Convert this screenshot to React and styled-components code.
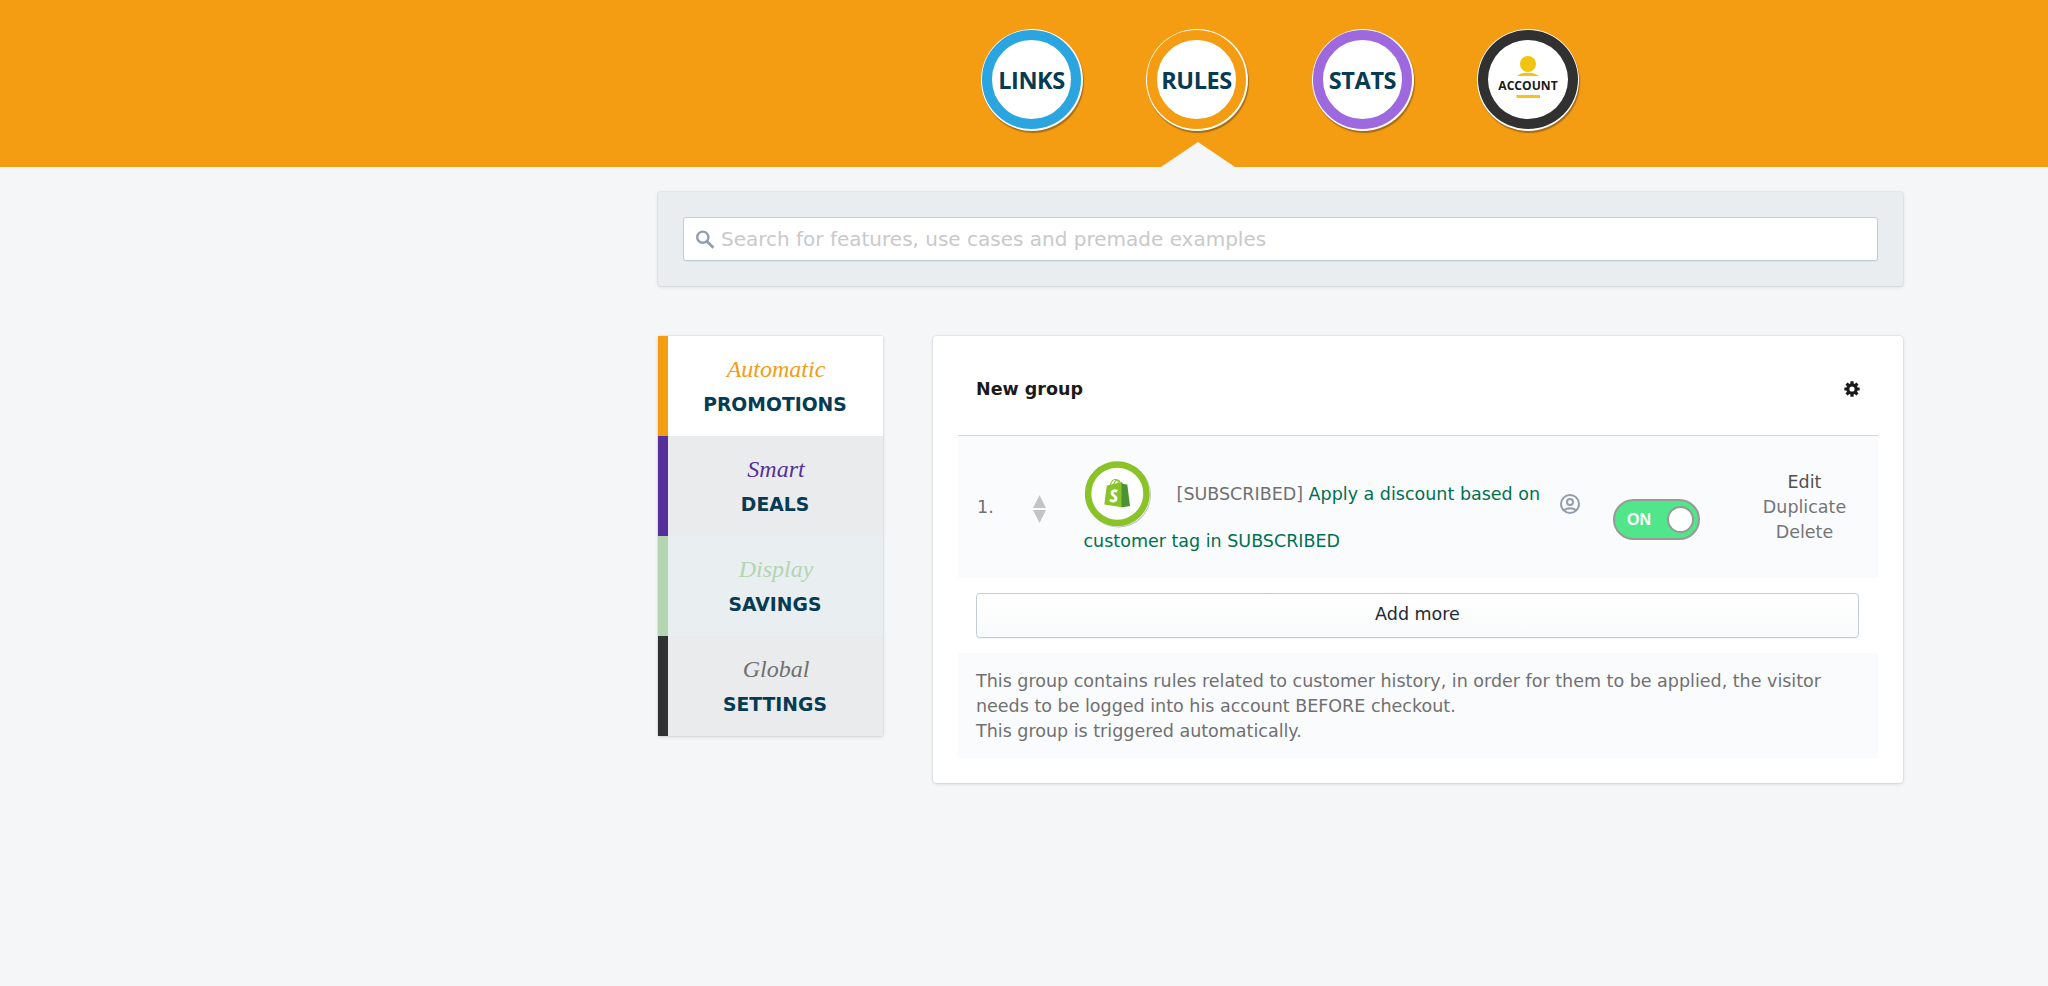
import React from "react";
import styled, { createGlobalStyle } from "styled-components";

const GlobalStyle = createGlobalStyle`
  * { box-sizing: border-box; }
  body {
    margin: 0;
    background: #f4f6f8;
    color: #707070;
    font: 17.5px/25px "DejaVu Sans", sans-serif;
  }
`;

const Screen = styled.div`
  min-height: 100vh;
`;

const Header = styled.header`
  height: 167px;
  padding-left: 981px;
  background: #f49c12;
`;

const Nav = styled.nav`
  display: grid;
  grid-template-columns: 165px 166px 165px 102px;
  padding-top: 29px;
`;

const NavItem = styled.a`
  position: relative;
  display: flex;
  width: 102px;
  height: 102px;
  border-radius: 50%;
  background: #fff;
  padding: 1px 2px 2px 1px;
  box-shadow: 1px 2px 1px rgba(70, 50, 20, 0.45);
`;

const Ring = styled.span`
  display: flex;
  flex: 1;
  align-items: center;
  justify-content: center;
  border: 10px solid ${(p) => p.$color};
  border-radius: 50%;
  background: #fff;
  color: #073b54;
  font: bold 23.5px/30px "Open Sans", sans-serif;
  letter-spacing: -0.4px;
`;

const Pointer = styled.span`
  position: absolute;
  top: 113px;
  left: 13.5px;
  width: 77px;
  height: 26px;
  background: #f4f6f8;
  clip-path: polygon(50% 0, 100% 100%, 0 100%);
`;

const AccountArt = styled.svg`
  width: 80px;
  height: 80px;
  flex: none;
  letter-spacing: 0;
`;

const Page = styled.main`
  width: 1245px;
  margin: 25px 0 0 658px;
`;

const cardShadow = `0 0 0 1px rgba(63, 63, 68, 0.05), 0 1px 3.75px 0 rgba(63, 63, 68, 0.17)`;

const SearchPanel = styled.section`
  height: 94px;
  padding: 25px;
  border-radius: 3px;
  background: #e9edf0;
  box-shadow: ${cardShadow};
`;

const SearchField = styled.label`
  display: flex;
  align-items: center;
  height: 44px;
  padding-left: 12px;
  gap: 6px;
  border: 1px solid #c4cdd5;
  border-radius: 3px;
  background: #fff;
  box-shadow: 0 1px 0 rgba(22, 29, 37, 0.05);
`;

const SearchInput = styled.input`
  flex: 1;
  border: 0;
  padding: 0;
  outline: 0;
  background: none;
  font: 20px/30px "DejaVu Sans", sans-serif;
  &::placeholder { color: #c9c9c9; opacity: 1; }
`;

const Columns = styled.div`
  display: flex;
  align-items: flex-start;
  gap: 50px;
  margin-top: 50px;
`;

const SideMenu = styled.aside`
  width: 225px;
  border-radius: 3px;
  box-shadow: ${cardShadow};
`;

const SideItem = styled.a`
  display: flex;
  flex-direction: column;
  align-items: center;
  gap: 6px;
  height: 100px;
  padding: 18px 1px 0 0;
  border-left: 10px solid ${(p) => p.$bar};
  background: ${(p) => p.$bg};
  color: #073b54;
`;

const Script = styled.span`
  padding-left: 2px;
  color: ${(p) => p.$color};
  font: italic 24px/30px "Z003", "URW Chancery L", "Liberation Serif", serif;
`;

const Caps = styled.span`
  font-size: 18.75px;
  font-weight: bold;
  line-height: 29px;
`;

const Card = styled.section`
  width: 970px;
  padding: 25px;
  border-radius: 4px;
  background: #fff;
  box-shadow: ${cardShadow};
`;

const CardHeader = styled.div`
  display: flex;
  align-items: center;
  justify-content: space-between;
  height: 75px;
  padding: 0 18.500px 18px 18px;
  border-bottom: 1px solid #d0d8df;
  color: #1a1a1a;
  font-weight: bold;
`;

const RuleRow = styled.div`
  display: flex;
  align-items: center;
  height: 142px;
  padding-left: 19px;
  background: #fafbfd;
`;

const Index = styled.span`
  width: 55px;
`;

const Sorter = styled.svg`
  width: 15px;
  height: 28px;
  margin: 4px 36.5px 0 0;
`;

const RuleText = styled.div`
  width: 460.5px;
`;

const Badge = styled.svg`
  width: 68px;
  height: 68px;
  margin-right: 19.5px;
  vertical-align: middle;
`;

const RuleLink = styled.a`
  color: #00704f;
`;

const PersonIcon = styled.svg`
  width: 20px;
  height: 20px;
  margin: 0 33px 6px 16px;
`;

const Toggle = styled.button`
  display: flex;
  align-items: center;
  justify-content: space-between;
  width: 87px;
  height: 41px;
  margin-top: 25px;
  padding: 0 4px 0 12px;
  border: 2px solid #999;
  border-radius: 20.5px;
  background: #50e689;
  color: #fff;
  font: bold 16px/20px "Liberation Sans", sans-serif;
`;

const Knob = styled.span`
  width: 27px;
  height: 27px;
  border: 2px solid #999;
  border-radius: 50%;
  background: #fff;
`;

const Actions = styled.div`
  display: flex;
  flex-direction: column;
  align-items: center;
  width: 147px;
  margin-left: 31px;
`;

const Action = styled.a`
  color: ${(p) => (p.$active ? "#505050" : "#757575")};
`;

const AddButton = styled.button`
  display: block;
  width: 883px;
  height: 45px;
  margin: 15px 0 15px 18px;
  padding: 0 0 2px;
  border: 1px solid #c4cdd5;
  border-radius: 4px;
  background: linear-gradient(#fff, #f9fafb);
  box-shadow: 0 1px 0 rgba(22, 29, 37, 0.05);
  color: #212b36;
  font: 17.5px/25px "DejaVu Sans", sans-serif;
`;

const Note = styled.p`
  height: 105px;
  margin: 0;
  padding: 16px 18px 14px;
  background: #fafbfd;
`;

const tabs = [
  { label: "LINKS", color: "#2aa5e0" },
  { label: "RULES", color: "#f49c12", active: true },
  { label: "STATS", color: "#9e69df" },
];

const sections = [
  { script: "Automatic", caps: "PROMOTIONS", bar: "#f49c12", bg: "#fff", ink: "#f49c12" },
  { script: "Smart", caps: "DEALS", bar: "#572f9b", bg: "#e9ebec", ink: "#572f9b" },
  { script: "Display", caps: "SAVINGS", bar: "#b3d5b1", bg: "#e9eef1", ink: "#b3d5b1" },
  { script: "Global", caps: "SETTINGS", bar: "#313132", bg: "#e9ebec", ink: "#707070" },
];

function SearchIcon() {
  return (
    <svg width="19" height="19" viewBox="0 0 19 19" fill="none" stroke="#919eb0" strokeWidth="2.4">
      <circle cx="6.8" cy="7.2" r="5.6" />
      <path d="M10.8 11.2L17.4 17.8" strokeWidth="2.8" />
    </svg>
  );
}

function GearIcon() {
  return (
    <svg width="16" height="16" viewBox="-8 -8 16 16">
      <circle r="4.2" fill="none" stroke="#1a1a1a" strokeWidth="3.2" />
      {[0, 45, 90, 135, 180, 225, 270, 315].map((a) => (
        <rect key={a} x="-1.6" y="-7.7" width="3.2" height="3.4" rx="0.5" fill="#1a1a1a" transform={`rotate(${a})`} />
      ))}
    </svg>
  );
}

function BagBadge() {
  return (
    <Badge viewBox="0 0 68 68">
      <circle cx="34.5" cy="34" r="32.4" fill="#b4b4b4" />
      <circle cx="33.9" cy="33.4" r="32.4" fill="#fff" />
      <circle cx="33.3" cy="32.7" r="29.2" fill="#fff" stroke="#8ac328" strokeWidth="6.5" />
      <path d="M26.5 24c.8-3.6 3-5.5 5-5.500 2 0 3 2 3.200 5M30 23c.6-2.500 2-4 3.600-4 1.400 0 2.300 1.300 2.700 3.500" fill="none" stroke="#8ac328" strokeWidth="1.1" />
      <path d="M22.800 24.500L38 21v25.200L20.300 43.500z" fill="#8ac328" />
      <path d="M37.500 21.200l1.700 1.900 4.100.5 2.700 21.300-8.500 1.600z" fill="#4c9132" />
      <path d="M33.300 30.300c-2-.9-5.200-.7-5.300 1.800-.1 2.400 4.300 2.700 4 5.600-.3 2.600-3.600 3-6.200 1.200" fill="none" stroke="#fff" strokeWidth="2.900" />
    </Badge>
  );
}

export default function App() {
  return (
    <Screen>
      <GlobalStyle />
      <Header>
        <Nav>
          {tabs.map((t) => (
            <NavItem key={t.label}>
              <Ring $color={t.color}>{t.label}</Ring>
              {t.active && <Pointer />}
            </NavItem>
          ))}
          <NavItem>
            <Ring $color="#313132">
              <AccountArt viewBox="0 0 80 80">
                <circle cx="40" cy="24" r="8" fill="#f1c40f" />
                <path d="M29 36c4-4.500 18-4.500 22 0z" fill="#f1c40f" />
                <text x="40" y="49.5" textAnchor="middle" fontFamily="Open Sans" fontWeight="bold" fontSize="12.1" fill="#1a1a1a">ACCOUNT</text>
                <rect x="28.500" y="55" width="23.500" height="3" fill="#f1c420" />
              </AccountArt>
            </Ring>
          </NavItem>
        </Nav>
      </Header>
      <Page>
        <SearchPanel>
          <SearchField>
            <SearchIcon />
            <SearchInput placeholder="Search for features, use cases and premade examples" />
          </SearchField>
        </SearchPanel>
        <Columns>
          <SideMenu>
            {sections.map((s) => (
              <SideItem key={s.caps} $bar={s.bar} $bg={s.bg}>
                <Script $color={s.ink}>{s.script}</Script>
                <Caps>{s.caps}</Caps>
              </SideItem>
            ))}
          </SideMenu>
          <Card>
            <CardHeader>
              New group
              <GearIcon />
            </CardHeader>
            <RuleRow>
              <Index>1.</Index>
              <Sorter viewBox="0 0 15 28" fill="#c4c4c4">
                <path d="M7.500 0L14 13H1zM1 15h13L7.500 28z" />
              </Sorter>
              <RuleText>
                <BagBadge /> [SUBSCRIBED]{" "}
                <RuleLink>Apply a discount based on customer tag in SUBSCRIBED</RuleLink>
              </RuleText>
              <PersonIcon viewBox="0 0 20 20" fill="none" stroke="#919eab" strokeWidth="2">
                <circle cx="10" cy="10" r="9" />
                <circle cx="10" cy="8" r="3" />
                <path d="M4 16.500c2.500-3 9.500-3 12 0" />
              </PersonIcon>
              <Toggle>
                ON
                <Knob />
              </Toggle>
              <Actions>
                <Action $active>Edit</Action>
                <Action>Duplicate</Action>
                <Action>Delete</Action>
              </Actions>
            </RuleRow>
            <AddButton>Add more</AddButton>
            <Note>
              This group contains rules related to customer history, in order for them to be applied, the
              visitor needs to be logged into his account BEFORE checkout.
              <br />
              This group is triggered automatically.
            </Note>
          </Card>
        </Columns>
      </Page>
    </Screen>
  );
}
